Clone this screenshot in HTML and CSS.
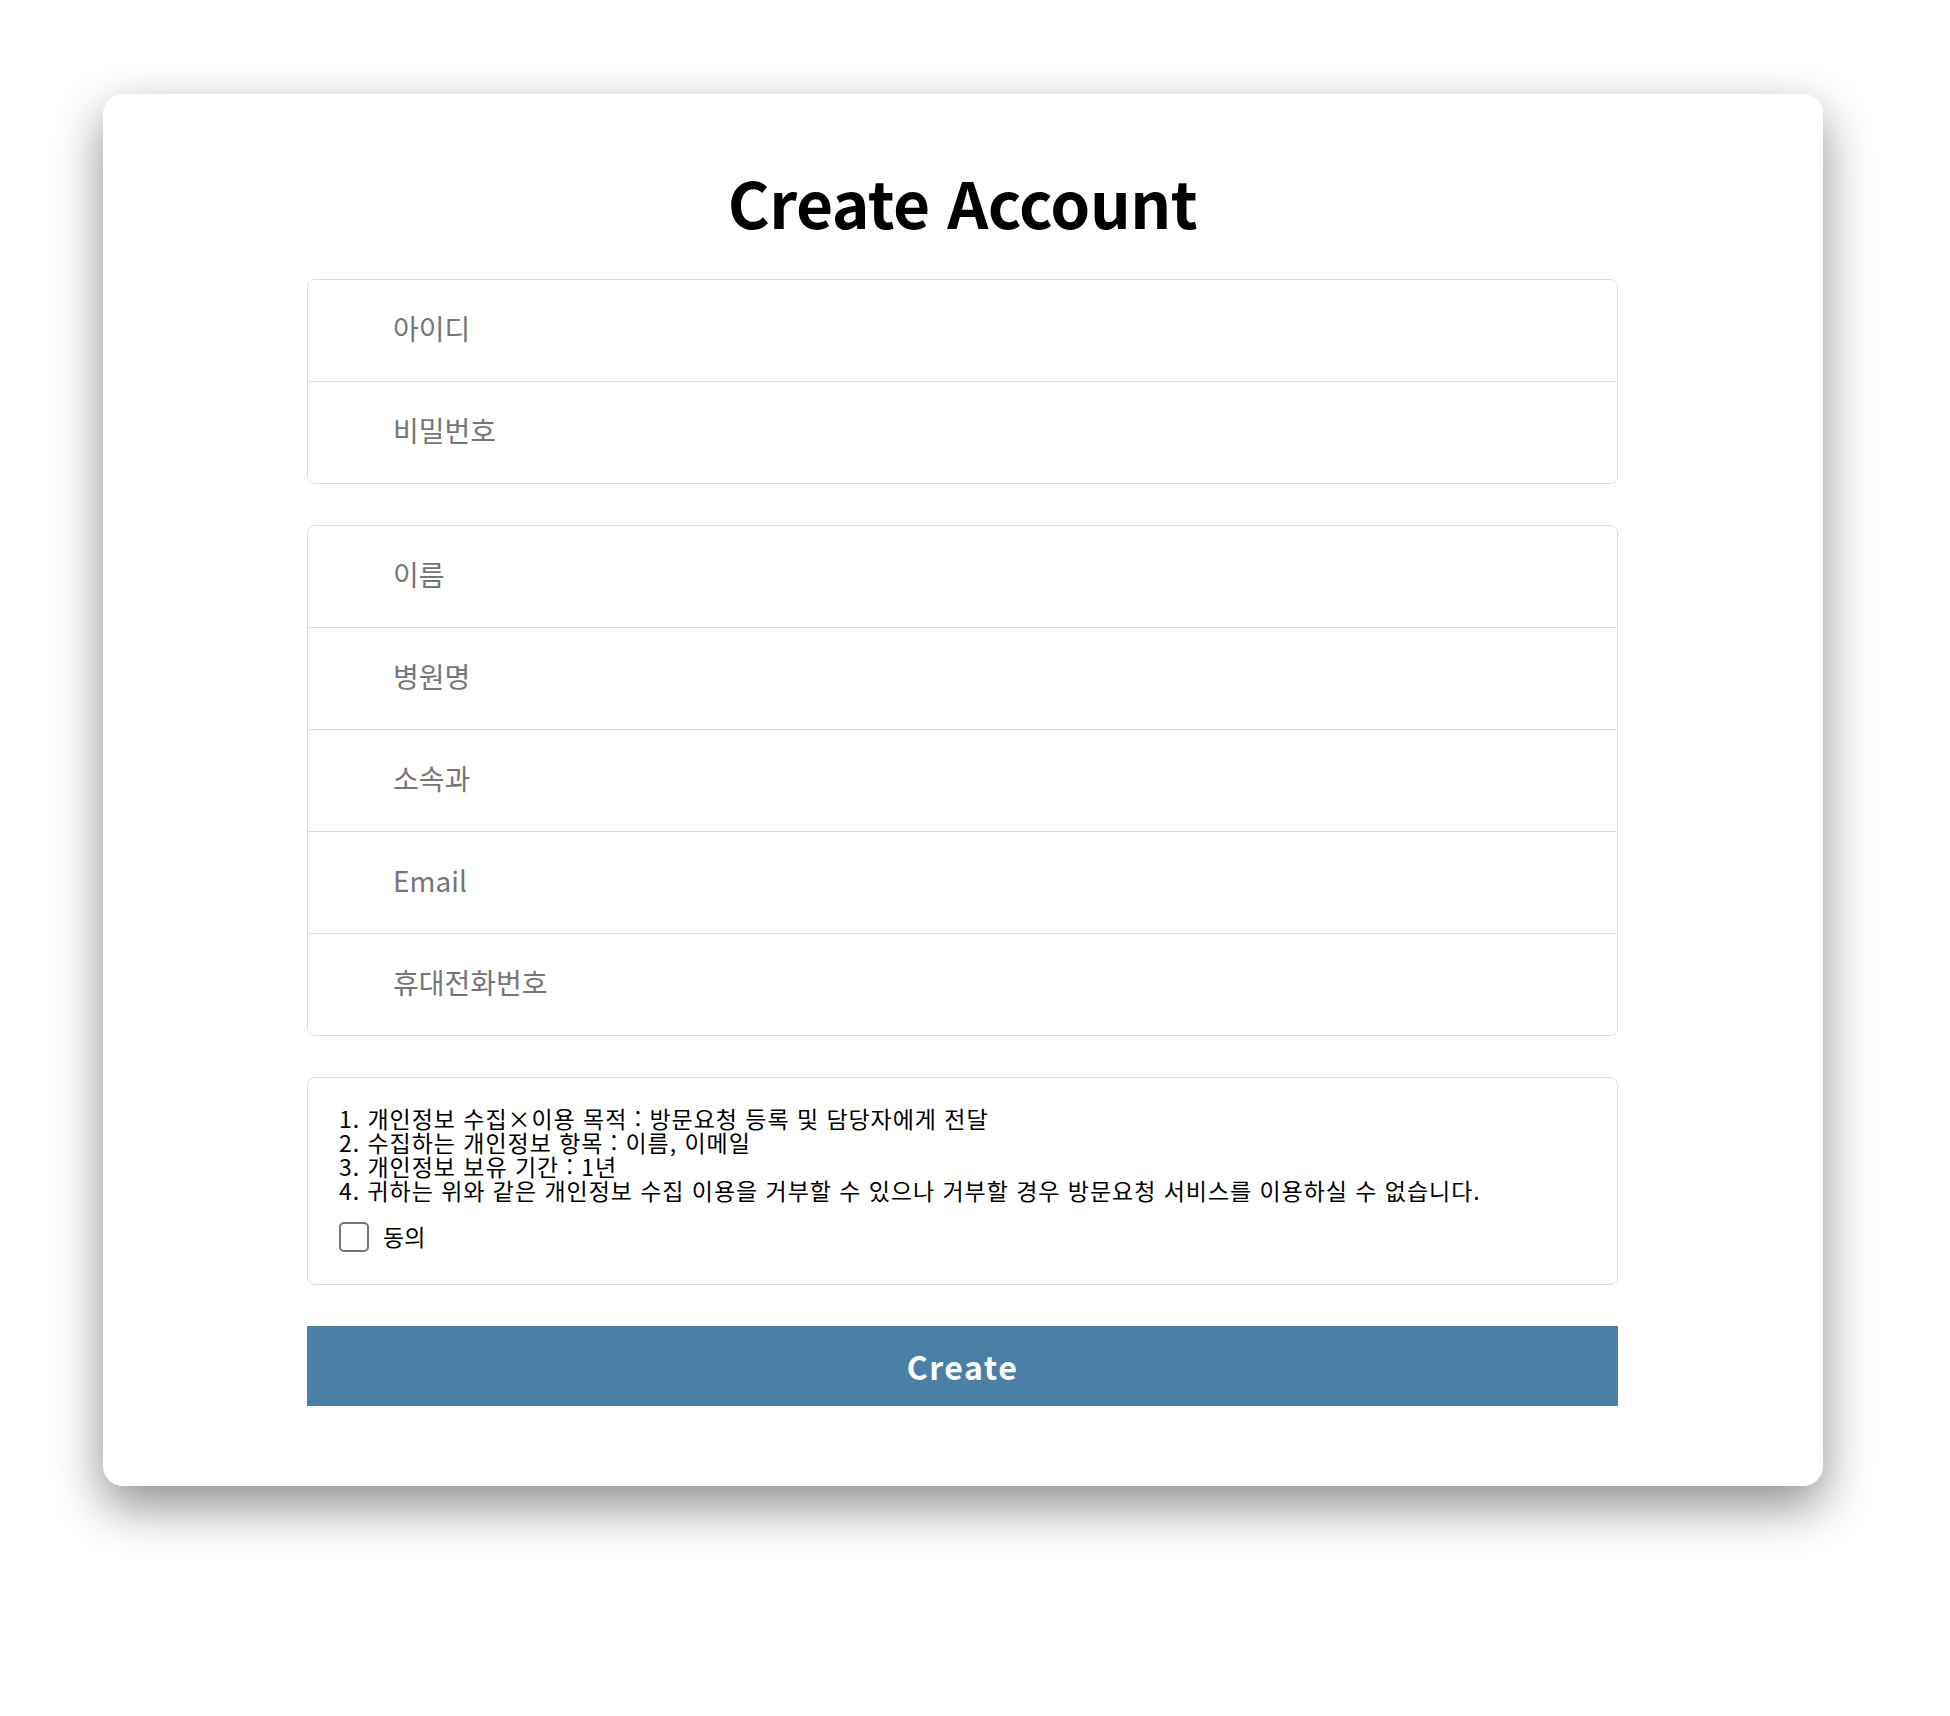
FILE: index.html
```html
<!DOCTYPE html>
<html lang="ko">
<head>
<meta charset="utf-8">
<title>Create Account</title>
<link rel="stylesheet" href="styles.css">
</head>
<body>
<div class="page">
  <div class="card">
    <h1 class="title">Create Account</h1>
    <div class="group">
      <input class="field" type="text" placeholder="아이디">
      <input class="field" type="password" placeholder="비밀번호">
    </div>
    <div class="group">
      <input class="field" type="text" placeholder="이름">
      <input class="field" type="text" placeholder="병원명">
      <input class="field" type="text" placeholder="소속과">
      <input class="field" type="text" placeholder="Email">
      <input class="field" type="text" placeholder="휴대전화번호">
    </div>
    <div class="terms">
      <p class="terms-text">1. 개인정보 수집×이용 목적 : 방문요청 등록 및 담당자에게 전달<br>2. 수집하는 개인정보 항목 : 이름, 이메일<br>3. 개인정보 보유 기간 : 1년<br>4. 귀하는 위와 같은 개인정보 수집 이용을 거부할 수 있으나 거부할 경우 방문요청 서비스를 이용하실 수 없습니다.</p>
      <label class="agree"><input class="check" type="checkbox"><span class="agree-label">동의</span></label>
    </div>
    <button class="submit" type="button">Create</button>
  </div>
</div>
</body>
</html>
```

FILE: styles.css
```css
html, body {
  margin: 0;
  padding: 0;
  background: #ffffff;
}

body {
  font-family: "Noto Sans CJK KR", "Noto Sans", sans-serif;
  color: #000;
}

.page {
  padding: 94px 127px 230px 103px;
}

.card {
  background: #fff;
  border-radius: 20px;
  box-shadow: 0 20px 50px rgba(0, 0, 0, 0.45);
  padding: 0 205px 80px 204px;
  display: flex;
  flex-direction: column;
}

.title {
  margin: 72px 0 43px;
  font-size: 64px;
  line-height: 70px;
  font-weight: 700;
  text-align: center;
  letter-spacing: -0.5px;
}

.group {
  display: flex;
  flex-direction: column;
  border: 1px solid #dcdcdc;
  border-radius: 8px;
  overflow: hidden;
  margin-bottom: 41px;
}

.field {
  display: block;
  box-sizing: border-box;
  height: 102px;
  border: none;
  border-bottom: 1px solid #dcdcdc;
  padding: 0 0 5px 85px;
  margin: 0;
  font-family: "Noto Sans CJK KR", "Noto Sans", sans-serif;
  font-size: 28px;
  color: #222;
  background: #fff;
  outline: none;
}

.field:last-child {
  border-bottom: none;
  height: 101px;
}

.field::placeholder {
  color: #767676;
}

.terms {
  border: 1px solid #dcdcdc;
  border-radius: 8px;
  padding: 28px 31px 32px;
  margin-bottom: 41px;
}

.terms-text {
  margin: 0;
  font-size: 23px;
  line-height: 24px;
  letter-spacing: 0.95px;
  color: #000;
}

.agree {
  display: flex;
  align-items: center;
  gap: 14px;
  margin-top: 20px;
}

.check {
  appearance: none;
  -webkit-appearance: none;
  width: 30px;
  height: 30px;
  margin: 0;
  border: 2px solid #767676;
  border-radius: 5px;
  box-sizing: border-box;
  background: #fff;
}

.agree-label {
  font-size: 23px;
  line-height: 30px;
  margin-top: -3px;
}

.submit {
  height: 80px;
  border: none;
  margin: 0;
  background: #4a80a6;
  color: #fff;
  font-family: "Noto Sans CJK KR", "Noto Sans", sans-serif;
  font-size: 32px;
  font-weight: 700;
  letter-spacing: 1.5px;
  cursor: pointer;
}
```
